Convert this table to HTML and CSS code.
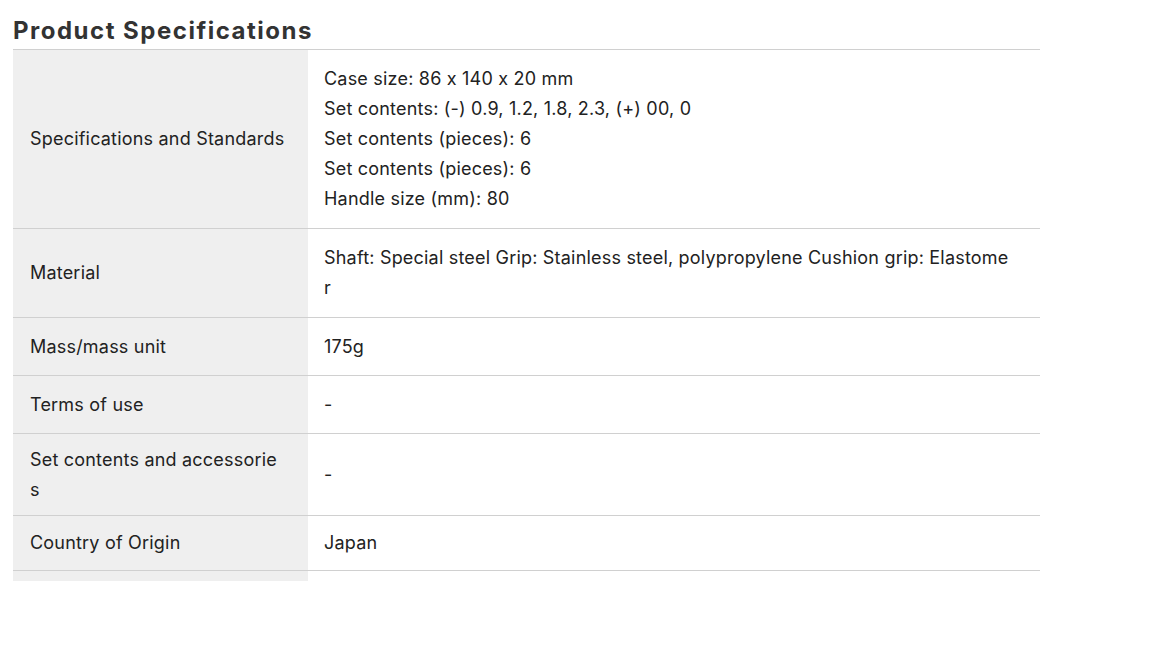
FILE: index.html
```html
<!DOCTYPE html>
<html lang="en">
<head>
<meta charset="utf-8">
<title>Product Specifications</title>
<link rel="stylesheet" href="styles.css">
</head>
<body>
<section class="specs">
  <h2 class="specs-title">Product Specifications</h2>
  <table class="spec-table">
    <tbody>
      <tr class="multi">
        <th><span class="label-fit">Specifications and Standards</span></th>
        <td>Case size: 86 x 140 x 20 mm<br>Set contents: (-) 0.9, 1.2, 1.8, 2.3, (+) 00, 0<br>Set contents (pieces): 6<br>Set contents (pieces): 6<br>Handle size (mm): 80</td>
      </tr>
      <tr class="multi">
        <th>Material</th>
        <td>Shaft: Special steel Grip: Stainless steel, polypropylene Cushion grip: Elastomer</td>
      </tr>
      <tr class="roomy">
        <th>Mass/mass unit</th>
        <td>175g</td>
      </tr>
      <tr class="roomy">
        <th>Terms of use</th>
        <td>-</td>
      </tr>
      <tr class="wrapped">
        <th>Set contents and accessories</th>
        <td>-</td>
      </tr>
      <tr>
        <th>Country of Origin</th>
        <td>Japan</td>
      </tr>
      <tr class="spacer">
        <th></th>
        <td></td>
      </tr>
    </tbody>
  </table>
</section>
</body>
</html>
```
FILE: styles.css
```css
html, body {
  margin: 0;
  padding: 0;
  background: #fff;
}
body {
  font-family: Inter, "Noto Sans", sans-serif;
  color: #222;
}
.specs {
  width: 1027px;
  padding: 16px 0 0 13px;
}
.specs-title {
  margin: 0 0 4px 0;
  font-size: 24px;
  line-height: 29px;
  font-weight: 700;
  color: #333;
  letter-spacing: 1.5px;
}
.spec-table {
  width: 1027px;
  border-collapse: collapse;
  table-layout: fixed;
  border-top: 1px solid #d0d0d0;
}
.spec-table th,
.spec-table td {
  font-size: 18px;
  line-height: 26px;
  font-weight: 400;
  text-align: left;
  vertical-align: middle;
  word-break: break-all;
  border-bottom: 1px solid #d0d0d0;
  padding: 14px 28px 14px 16px;
  color: #222;
  letter-spacing: 0.2px;
}
.spec-table th {
  width: 250px;
  background: #efefef;
  padding-left: 17px;
  padding-right: 28px;
}
.spec-table .multi td {
  line-height: 30px;
}
.spec-table .roomy th,
.spec-table .roomy td {
  padding-top: 15.5px;
  padding-bottom: 15.5px;
}
.spec-table .wrapped th,
.spec-table .wrapped td {
  line-height: 30px;
  padding-top: 10.5px;
  padding-bottom: 10.5px;
}
.label-fit {
  white-space: nowrap;
}
.spec-table .spacer th,
.spec-table .spacer td {
  border-bottom: none;
  padding: 0;
  height: 10px;
}
```
